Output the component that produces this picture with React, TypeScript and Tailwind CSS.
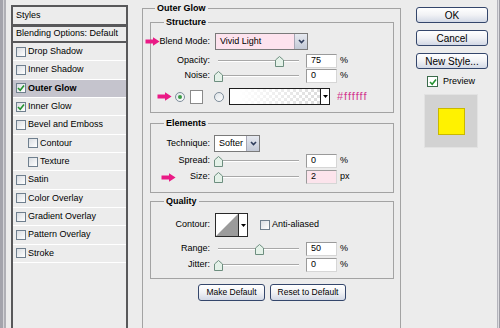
import React from "react";

function Box({ on }: { on?: boolean }) {
  return (
    <span className="flex h-[10px] w-[10px] shrink-0 items-center justify-center border border-[#6f7f8e] bg-gradient-to-br from-[#d9dde2] to-white">
      {on && (
        <svg width="8" height="8" viewBox="0 0 8 8">
          <path d="M1 4 L3.2 6.2 L7 1.6" stroke="#23922f" strokeWidth="1.6" fill="none" />
        </svg>
      )}
    </span>
  );
}

function Radio({ on }: { on?: boolean }) {
  return (
    <span className="flex h-[10px] w-[10px] shrink-0 items-center justify-center rounded-full border border-[#7d8c9a] bg-gradient-to-br from-[#dde2e6] to-white">
      {on && <span className="h-[4px] w-[4px] rounded-full bg-[#3c9a46]" />}
    </span>
  );
}

function Arrow({ className }: { className: string }) {
  return (
    <svg className={className} width="15" height="9" viewBox="0 0 15 9">
      <path d="M0.5 2.4 H8 V0.2 L14.6 4.5 L8 8.8 V6.6 H0.5 Z" fill="#ea1a86" />
    </svg>
  );
}

function Chevron() {
  return (
    <svg width="7" height="5" viewBox="0 0 7 5">
      <path d="M1 1 L3.5 3.6 L6 1" stroke="#2f3d5c" strokeWidth="1.6" fill="none" />
    </svg>
  );
}

function Slider({ pct }: { pct: number }) {
  return (
    <div className="relative ml-[4px] h-[14px] w-[88px] shrink-0">
      <div className="absolute left-[4px] right-[3px] top-[6px] h-[2px] border-t border-b border-t-[#a8a8a8] border-b-white" />
      <svg className="absolute top-[2px]" style={{ left: `${pct * 0.81}px` }} width="9" height="11" viewBox="0 0 9 11">
        <path d="M0.5 4 L4.5 0.5 L8.5 4 V10.5 H0.5 Z" fill="#e4f1e8" stroke="#6d8e7f" />
      </svg>
    </div>
  );
}

function Num({ v, pink }: { v: string; pink?: boolean }) {
  return (
    <div
      className={`ml-[4px] flex h-[14px] w-[31px] shrink-0 items-center border border-[#9a9a9a] border-b-[#d6d6d6] border-r-[#d6d6d6] pl-[4px] ${
        pink ? "bg-[#fce4ec]" : "bg-white"
      }`}
    >
      {v}
    </div>
  );
}

function Label({ children }: { children: React.ReactNode }) {
  return <div className="w-[59px] shrink-0 text-right">{children}</div>;
}

function Group({ title, className, children }: { title: string; className: string; children: React.ReactNode }) {
  return (
    <fieldset className={`border border-[#a3a3a3] ${className}`}>
      <legend className="ml-[13px] px-[2px] font-bold leading-[11px]">{title}</legend>
      {children}
    </fieldset>
  );
}

const styles = [
  { name: "Drop Shadow" },
  { name: "Inner Shadow" },
  { name: "Outer Glow", on: true, active: true },
  { name: "Inner Glow", on: true },
  { name: "Bevel and Emboss" },
  { name: "Contour", sub: true },
  { name: "Texture", sub: true },
  { name: "Satin" },
  { name: "Color Overlay" },
  { name: "Gradient Overlay" },
  { name: "Pattern Overlay" },
  { name: "Stroke" },
];

const xpBtn =
  "flex items-center justify-center rounded-[3px] border border-[#34466b] bg-gradient-to-b from-white via-[#f1f2f5] to-[#d3d9e6]";

export default function App() {
  return (
    <div className="relative flex h-[328px] w-[500px] overflow-hidden bg-[#ececec] font-['Liberation_Sans',Arial,sans-serif] text-[9px] text-black">
      {/* window frame, left */}
      <div className="flex shrink-0">
        <div className="w-[3px] bg-[#a4a4ac]" />
        <div className="w-[1px] bg-[#d4d4d8]" />
        <div className="w-[2px] bg-[#b0b0b6]" />
        <div className="w-[5px]" />
      </div>

      {/* styles list */}
      <div className="mt-[5px] flex h-[340px] w-[117px] shrink-0 flex-col border-x-2 border-t-2 border-[#58585a]">
        <div className="flex h-[20px] shrink-0 items-center border-b-[3px] border-[#58585a] pl-[3px]">Styles</div>
        <div className="flex h-[16px] shrink-0 items-center border-b-2 border-[#58585a] pl-[3px]">Blending Options: Default</div>
        {styles.map((s) => (
          <div
            key={s.name}
            className={`flex h-[18.33px] shrink-0 items-center gap-[2px] border-b border-white ${s.sub ? "pl-[15px]" : "pl-[3px]"} ${
              s.active ? "bg-[#c5c4cd] font-bold" : ""
            }`}
          >
            <Box on={s.on} />
            <span>{s.name}</span>
          </div>
        ))}
      </div>

      {/* outer glow panel */}
      <fieldset className="ml-[14px] mt-[3px] h-[340px] w-[259px] shrink-0 border border-b-0 border-[#a3a3a3]">
        <legend className="ml-[12px] px-[2px] font-bold leading-[11px]">Outer Glow</legend>
        <div className="pl-[7px] pr-[6px]">
          <Group title="Structure" className="mt-[3px] pb-[7px]">
            <div className="mt-[5px] flex h-[17px] items-center">
              <Label>Blend Mode:</Label>
              <div className="ml-[5px] flex h-[17px] w-[93px] items-stretch border border-[#7a7a7a] bg-[#fde3ee]">
                <span className="flex flex-1 items-center pl-[4px]">Vivid Light</span>
                <span className="flex w-[13px] items-center justify-center border-l border-[#a7a7b5] bg-gradient-to-b from-[#e6e9f0] to-[#c3c9d6]">
                  <Chevron />
                </span>
              </div>
            </div>
            <div className="mt-[4px] flex h-[14px] items-center">
              <Label>Opacity:</Label>
              <Slider pct={75} />
              <Num v="75" />
              <span className="ml-[3px]">%</span>
            </div>
            <div className="mt-[1px] flex h-[14px] items-center">
              <Label>Noise:</Label>
              <Slider pct={0} />
              <Num v="0" />
              <span className="ml-[3px]">%</span>
            </div>
            <div className="mt-[5px] flex h-[17px] items-center pl-[24px]">
              <Radio on />
              <span className="ml-[5px] h-[14px] w-[13px] border border-[#8a8a8a] bg-white" />
              <span className="ml-[11px]">
                <Radio />
              </span>
              <div className="ml-[5px] flex h-[17px] w-[101px] border border-[#1e1e1e]">
                <span className="flex-1 bg-[linear-gradient(to_right,#ffffff_10%,rgba(255,255,255,0)),repeating-conic-gradient(#dcdcdc_0%_25%,#ffffff_0%_50%)] bg-[length:100%_100%,6px_6px]" />
                <span className="flex w-[9px] items-center justify-center border-l border-[#1e1e1e] bg-white">
                  <svg width="5" height="3" viewBox="0 0 5 3">
                    <path d="M0 0 H5 L2.5 3 Z" fill="#000" />
                  </svg>
                </span>
              </div>
              <span className="ml-[7px] text-[11px] tracking-[1px] text-[#d2368e]">#ffffff</span>
            </div>
          </Group>

          <Group title="Elements" className="mt-[5px] pb-[8px]">
            <div className="mt-[6px] flex h-[17px] items-center">
              <Label>Technique:</Label>
              <div className="ml-[4px] flex h-[17px] w-[46px] items-stretch border border-[#7a7a7a] bg-white">
                <span className="flex flex-1 items-center pl-[4px]">Softer</span>
                <span className="flex w-[13px] items-center justify-center border-l border-[#a7a7b5] bg-gradient-to-b from-[#e6e9f0] to-[#c3c9d6]">
                  <Chevron />
                </span>
              </div>
            </div>
            <div className="mt-[2px] flex h-[14px] items-center">
              <Label>Spread:</Label>
              <Slider pct={0} />
              <Num v="0" />
              <span className="ml-[3px]">%</span>
            </div>
            <div className="mt-[2px] flex h-[14px] items-center">
              <Label>Size:</Label>
              <Slider pct={0} />
              <Num v="2" pink />
              <span className="ml-[3px]">px</span>
            </div>
          </Group>

          <Group title="Quality" className="mt-[3px] pb-[6px]">
            <div className="mt-[6px] flex h-[24px] items-center">
              <Label>Contour:</Label>
              <div className="ml-[5px] flex h-[24px] w-[33px] border border-[#2a2a2a] bg-white">
                <svg width="22" height="22" viewBox="0 0 22 22">
                  <polygon points="0,22 22,0 22,22" fill="#9b9b9b" />
                </svg>
                <span className="flex flex-1 items-center justify-center border-l border-[#2a2a2a]">
                  <svg width="5" height="3" viewBox="0 0 5 3">
                    <path d="M0 0 H5 L2.5 3 Z" fill="#000" />
                  </svg>
                </span>
              </div>
              <span className="ml-[12px]">
                <Box />
              </span>
              <span className="ml-[2px]">Anti-aliased</span>
            </div>
            <div className="mt-[5px] flex h-[14px] items-center">
              <Label>Range:</Label>
              <Slider pct={50} />
              <Num v="50" />
              <span className="ml-[3px]">%</span>
            </div>
            <div className="mt-[2px] flex h-[14px] items-center">
              <Label>Jitter:</Label>
              <Slider pct={0} />
              <Num v="0" />
              <span className="ml-[3px]">%</span>
            </div>
          </Group>

          <div className="mt-[5px] flex justify-center gap-[5px] text-[8.5px]">
            <button className={`${xpBtn} h-[17px] w-[67px]`}>Make Default</button>
            <button className={`${xpBtn} h-[17px] w-[76px]`}>Reset to Default</button>
          </div>
        </div>
      </fieldset>

      {/* right column */}
      <div className="flex w-[96px] shrink-0 flex-col pl-[15px] pt-[7px] text-[10px]">
        <button className={`${xpBtn} h-[16px] w-[72px]`}>OK</button>
        <button className={`${xpBtn} mt-[7px] h-[16px] w-[72px]`}>Cancel</button>
        <button className={`${xpBtn} mt-[7px] h-[16px] w-[72px]`}>New Style...</button>
        <div className="ml-[11px] mt-[7px] flex h-[11px] items-center gap-[5px]">
          <span className="flex h-[11px] w-[11px] items-center justify-center border border-[#3b6b4b] bg-white">
            <svg width="8" height="8" viewBox="0 0 8 8">
              <path d="M1 4 L3.2 6.2 L7 1.6" stroke="#23922f" strokeWidth="1.6" fill="none" />
            </svg>
          </span>
          <span className="text-[9px]">Preview</span>
        </div>
        <div className="ml-[8px] mt-[7px] flex h-[54px] w-[54px] items-center justify-center border border-[#e2e2e2] bg-[#d2d2d2]">
          <div className="h-[27px] w-[27px] border border-[#c9b800] bg-[#fff200]" />
        </div>
      </div>

      {/* window frame, right */}
      <div className="flex shrink-0">
        <div className="w-[1px] bg-[#b4b4bc]" />
        <div className="w-[1px] bg-[#dcdce0]" />
        <div className="w-[1px] bg-[#9c9ca4]" />
      </div>

      <Arrow className="absolute left-[145px] top-[37px]" />
      <Arrow className="absolute left-[157px] top-[92px]" />
      <Arrow className="absolute left-[161px] top-[173px]" />
    </div>
  );
}
